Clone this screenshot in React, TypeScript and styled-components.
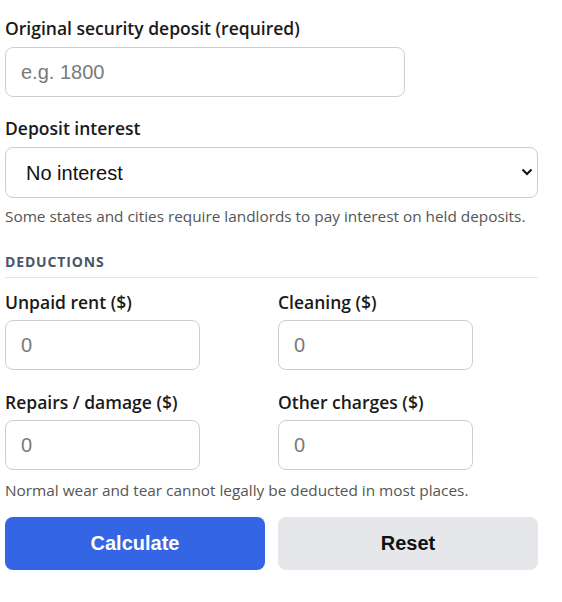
import React from "react";
import styled, { createGlobalStyle } from "styled-components";

const Global = createGlobalStyle`
  html, body { margin: 0; padding: 0; background: #fff; }
  body { font-family: "Open Sans", "Noto Sans", sans-serif; color: #1a1a1a; }
  * { box-sizing: border-box; }
`;

const Form = styled.form`
  width: 533px;
  margin: 16px 0 0 5px;
  display: flex;
  flex-direction: column;
`;

const Field = styled.div<{ $mb?: number }>`
  display: flex;
  flex-direction: column;
  margin-bottom: ${(p) => (p.$mb ?? 19)}px;
`;

const Label = styled.label<{ $mb?: number }>`
  font-size: 17.5px;
  font-weight: 600;
  line-height: 24px;
  color: #1a1a1a;
  margin-bottom: ${(p) => (p.$mb ?? 7)}px;
`;

const Input = styled.input<{ $w: number }>`
  width: ${(p) => p.$w}px;
  height: 50px;
  border: 1px solid #ccced6;
  border-radius: 8px;
  padding: 0 15px;
  font-family: "Liberation Sans", Arial, sans-serif;
  font-size: 20px;
  color: #222;
  background: #fff;
  outline: none;
  &::placeholder { color: #7a7a7a; }
`;

const SelectWrap = styled.div`
  position: relative;
  width: 533px;
  height: 51px;
`;

const Select = styled.select`
  appearance: none;
  width: 100%;
  height: 100%;
  border: 1px solid #ccced6;
  border-radius: 8px;
  padding: 0 20px;
  font-family: "Liberation Sans", Arial, sans-serif;
  font-size: 20px;
  color: #111;
  background: #fff;
  outline: none;
`;

const Chevron = styled.svg`
  position: absolute;
  right: 5px;
  top: 21px;
  pointer-events: none;
`;

const Help = styled.p<{ $mt: number; $mb: number }>`
  margin: ${(p) => p.$mt}px 0 ${(p) => p.$mb}px;
  font-size: 15.35px;
  line-height: 20px;
  color: #555;
`;

const Heading = styled.h3`
  margin: 0 0 12px;
  padding-bottom: 5px;
  border-bottom: 1px solid #e3e5ea;
  font-size: 14px;
  line-height: 20px;
  font-weight: 700;
  letter-spacing: 0.06em;
  text-transform: uppercase;
  color: #4a5568;
`;

const Grid = styled.div`
  display: grid;
  grid-template-columns: 260px 260px;
  column-gap: 13px;
  row-gap: 20px;
`;

const Buttons = styled.div`
  display: grid;
  grid-template-columns: 260px 260px;
  column-gap: 13px;
`;

const Button = styled.button<{ $primary?: boolean }>`
  height: 53px;
  border: none;
  border-radius: 8px;
  font-family: "Liberation Sans", Arial, sans-serif;
  font-size: 20px;
  font-weight: 700;
  cursor: pointer;
  background: ${(p) => (p.$primary ? "#3465e4" : "#e5e7eb")};
  color: ${(p) => (p.$primary ? "#fff" : "#111")};
`;

const deductions = ["Unpaid rent ($)", "Cleaning ($)", "Repairs / damage ($)", "Other charges ($)"];

export default function App() {
  return (
    <>
      <Global />
      <Form onSubmit={(e) => e.preventDefault()}>
        <Field>
          <Label>Original security deposit (required)</Label>
          <Input $w={400} placeholder="e.g. 1800" />
        </Field>
        <Field $mb={0}>
          <Label>Deposit interest</Label>
          <SelectWrap>
            <Select defaultValue="none">
              <option value="none">No interest</option>
            </Select>
            <Chevron width="12" height="8" viewBox="0 0 12 8">
              <path d="M1.5 1.5 L6 6 L10.5 1.5" fill="none" stroke="#111" strokeWidth="2" />
            </Chevron>
          </SelectWrap>
        </Field>
        <Help $mt={8} $mb={26}>Some states and cities require landlords to pay interest on held deposits.</Help>
        <Heading>Deductions</Heading>
        <Grid>
          {deductions.map((d) => (
            <Field key={d} $mb={0}>
              <Label $mb={6}>{d}</Label>
              <Input $w={195} placeholder="0" />
            </Field>
          ))}
        </Grid>
        <Help $mt={10} $mb={17}>Normal wear and tear cannot legally be deducted in most places.</Help>
        <Buttons>
          <Button $primary type="submit">Calculate</Button>
          <Button type="button">Reset</Button>
        </Buttons>
      </Form>
    </>
  );
}
